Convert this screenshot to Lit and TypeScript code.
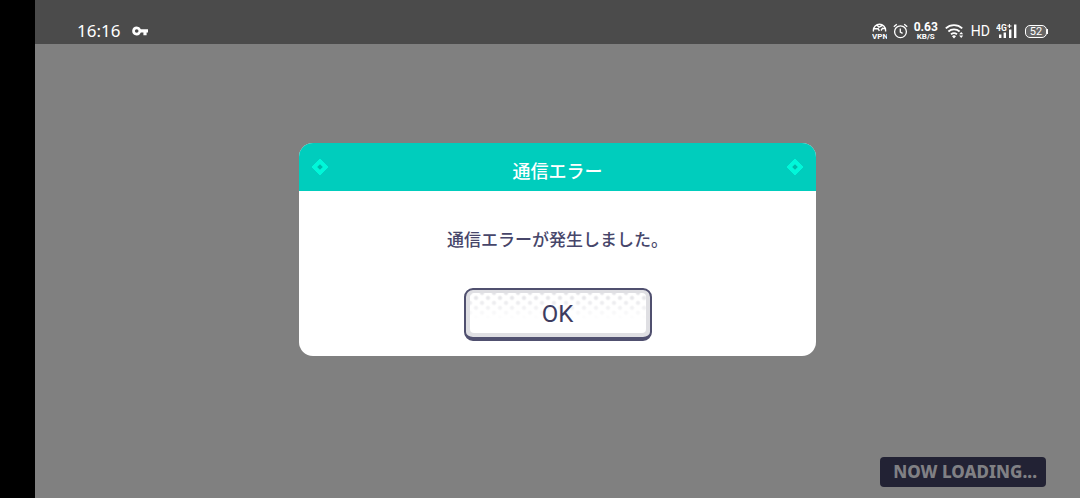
import { LitElement, html, css } from "lit";
import { customElement, property } from "lit/decorators.js";

@customElement("status-bar")
class StatusBar extends LitElement {
  @property() time = "";
  @property() rate = "";
  @property() battery = "";

  static styles = css`
    :host {
      display: flex;
      justify-content: space-between;
      box-sizing: border-box;
      height: 44px;
      padding: 17px 32px 0 42px;
      background: #4b4b4b;
      color: #fff;
      font-family: Roboto, sans-serif;
    }
    .side {
      display: flex;
      align-items: center;
      height: 28px;
    }
    svg {
      display: block;
      fill: none;
      stroke: #fff;
    }
    .solid {
      fill: #fff;
      stroke: none;
    }
    .left {
      gap: 12px;
    }
    .right {
      gap: 6px;
    }
    .time {
      font: 17px/28px "Noto Sans", sans-serif;
    }
    .rate {
      display: flex;
      flex-direction: column;
      align-items: center;
      font-size: 12px;
      line-height: 12px;
      font-weight: 700;
    }
    .unit {
      font-size: 8px;
      line-height: 8px;
    }
    .hd {
      font-size: 14px;
      line-height: 28px;
    }
    .label {
      font-family: Roboto, sans-serif;
      font-weight: 700;
      fill: #fff;
      stroke: none;
    }
    .battery {
      box-sizing: border-box;
      width: 22px;
      height: 13px;
      border: 1px solid #fff;
      border-radius: 5px;
      font-size: 11px;
      line-height: 11px;
      text-align: center;
      background: #666;
    }
    .cell {
      display: flex;
      align-items: center;
    }
    .tip {
      width: 1px;
      height: 5px;
      background: #fff;
    }
  `;

  render() {
    return html`
      <div class="side left">
        <span class="time">${this.time}</span>
        <svg class="solid" width="16" height="10" viewBox="0 0 16 10" aria-hidden="true">
          <path fill-rule="evenodd" d="M4.7 0.4a4.5 4.5 0 0 1 4.2 2.8H16v3.4h-1.4v2.6h-3.2V6.6H8.9A4.5 4.5 0 1 1 4.7.4zm0 2.8a1.8 1.8 0 1 0 0 3.6 1.8 1.8 0 0 0 0-3.6z" />
        </svg>
      </div>
      <div class="side right">
        <svg width="15" height="16" viewBox="0 0 15 16" aria-label="VPN">
          <path d="M1.4 8.6V7.2a6.1 6 0 0 1 12.2 0v1.4M2 5.8h4.2l1.2 2M5 2.2l2 2 3.2-1.6M9 7.5l1.5-2.3 2.8.4" stroke-width="1.4" />
          <text class="label" x="0" y="15.5" font-size="8">VPN</text>
        </svg>
        <svg width="15" height="16" viewBox="0 0 15 16" aria-hidden="true">
          <circle cx="7.5" cy="8.7" r="5.9" stroke-width="1.3" />
          <path d="M7.3 5.6v3.5l2.3 1.3M.8 3.8l3-2.6M14.2 3.8l-3-2.6" stroke-width="1.3" />
        </svg>
        <div class="rate"><span>${this.rate}</span><span class="unit">KB/S</span></div>
        <svg width="21" height="16" viewBox="-1 0 21 16" aria-hidden="true">
          <path d="M.8 5.4a12 12 0 0 1 16.4 0M3.4 8.5a8.2 8.2 0 0 1 11.2 0M6 11.3a4.8 4.8 0 0 1 6 0" stroke-width="1.8" />
          <path class="solid" d="M9 15.4l-2-2.2a3 3 0 0 1 4 0zM14.2 11.3l2-2.3 2 2.3zM14.2 12.6l2 2.3 2-2.3z" />
        </svg>
        <span class="hd">HD</span>
        <svg width="23" height="16" viewBox="0 0 23 16" aria-hidden="true">
          <text class="label" x="0" y="7.5" font-size="8.5">4G</text>
          <path class="solid" d="M3 11.5h2.4v3.5H3zM7.6 9.5H10V15H7.6zM13 6.5h2.4V15H13zM18 1.5h2.4V15H18z" />
          <path d="M11.3 3h4.2M13.4 .9v4.2" stroke-width="1.1" />
        </svg>
        <div class="cell"><div class="battery">${this.battery}</div><div class="tip"></div></div>
      </div>
    `;
  }
}

@customElement("error-dialog")
class ErrorDialog extends LitElement {
  @property() heading = "";
  @property() message = "";

  static styles = css`
    :host {
      display: block;
      width: 90%;
      max-width: 517px;
      font-family: "Noto Sans CJK JP", sans-serif;
    }
    .dialog {
      overflow: hidden;
      border-radius: 14px;
      background: #fff;
    }
    .head {
      display: flex;
      align-items: center;
      justify-content: space-between;
      height: 48px;
      padding: 0 12px;
      background: #00cdbd;
    }
    .title {
      margin: 0;
      padding-top: 6px;
      color: #fff;
      font-size: 18px;
      line-height: 28px;
      font-weight: 500;
    }
    .body {
      display: flex;
      flex-direction: column;
      align-items: center;
      gap: 35px;
      padding: 34px 16px 15px;
    }
    .message {
      margin: 0;
      color: #47466a;
      font-size: 17px;
      line-height: 28px;
      font-weight: 500;
    }
    .ok {
      box-sizing: border-box;
      width: 188px;
      height: 53px;
      padding: 3px 4px 4px;
      border: 2px solid #50506f;
      border-bottom-width: 4px;
      border-radius: 9px;
      background: #dfdfe3;
      color: #3d3c60;
      font: 24px/42px Roboto, sans-serif;
      cursor: pointer;
    }
    .face {
      display: block;
      height: 40px;
      border-radius: 4px;
      background:
        linear-gradient(to bottom, transparent, #fff 26px),
        radial-gradient(circle, #e2e2e6 1px, transparent 3px) 0 0 / 12px 10px,
        radial-gradient(circle, #e2e2e6 1px, transparent 3px) 6px 5px / 12px 10px,
        #fff;
    }
  `;

  render() {
    const gem = html`<svg width="18" height="18" viewBox="0 0 18 18" aria-hidden="true">
      <path fill="#00f7d9" stroke="#00f7d9" stroke-linejoin="round" d="M9 1l8 8-8 8-8-8z" />
      <path fill="#00b9a9" d="M9 6.2L11.8 9 9 11.8 6.2 9z" />
    </svg>`;
    return html`
      <section class="dialog" role="alertdialog" aria-labelledby="title" aria-describedby="message">
        <header class="head">${gem}<h1 class="title" id="title">${this.heading}</h1>${gem}</header>
        <div class="body">
          <p class="message" id="message">${this.message}</p>
          <button class="ok" type="button"><span class="face">OK</span></button>
        </div>
      </section>
    `;
  }
}

@customElement("app-root")
class AppRoot extends LitElement {
  static styles = css`
    :host {
      display: grid;
      grid-template-rows: 44px 1fr 44px;
      box-sizing: border-box;
      min-height: 100vh;
      border-left: 35px solid #000;
      background: #808080;
    }
    .scene {
      display: flex;
      align-items: center;
      justify-content: center;
    }
    .footer {
      display: flex;
      justify-content: flex-end;
      align-items: flex-start;
      padding: 3px 34px 0 0;
    }
    .loading {
      padding: 0 9px 0 13px;
      border-radius: 4px;
      background: #222234;
      color: #808084;
      font: 800 17px/30px "Noto Sans", sans-serif;
    }
  `;

  render() {
    return html`
      <status-bar time="16:16" rate="0.63" battery="52"></status-bar>
      <main class="scene">
        <error-dialog heading="通信エラー" message="通信エラーが発生しました。"></error-dialog>
      </main>
      <footer class="footer"><div class="loading" role="status">NOW LOADING...</div></footer>
    `;
  }
}
